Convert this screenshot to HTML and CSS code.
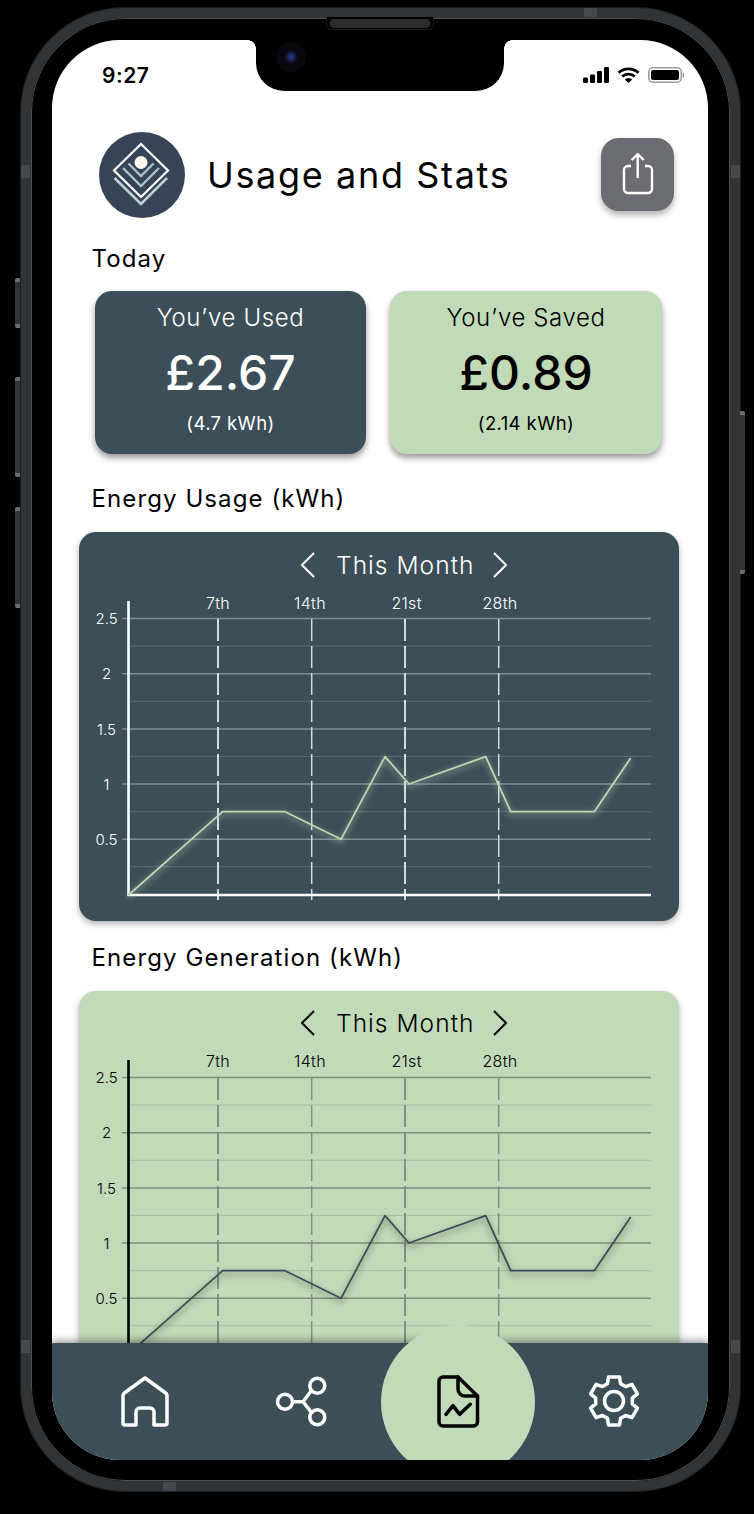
FILE: index.html
```html
<!DOCTYPE html>
<html lang="en">
<head>
    <meta charset="UTF-8">
    <meta name="viewport" content="width=device-width, initial-scale=1.0">
    <title>Usage and Stats</title>
    <link rel="stylesheet" href="styles.css">
</head>
<body>
<div class="phone">
    <span class="side-btn btn-mute"></span>
    <span class="side-btn btn-up"></span>
    <span class="side-btn btn-down"></span>
    <span class="side-btn btn-power"></span>
    <span class="band band-left1"></span>
    <span class="band band-left2"></span>
    <span class="band band-right1"></span>
    <span class="band band-right2"></span>
    <span class="band-h band-top"></span>
    <span class="band-h band-bottom"></span>
    <div class="speaker"></div>

    <div class="screen">
        <div class="notch"><span class="camera"></span></div>

        <div class="status">
            <span class="time">9:27</span>
            <div class="status-icons">
                <svg width="26" height="16" viewBox="0 0 26 16">
                    <rect x="0" y="10.5" width="5" height="5.5" rx="1.2"/>
                    <rect x="7" y="7.5" width="5" height="8.5" rx="1.2"/>
                    <rect x="14" y="4" width="5" height="12" rx="1.2"/>
                    <rect x="21" y="0" width="5" height="16" rx="1.2"/>
                </svg>
                <svg width="23" height="16" viewBox="0 0 23 16">
                    <path class="wifi-arc" d="M1.5 5.8A14.5 14.5 0 0 1 21.5 5.8"/>
                    <path class="wifi-arc" d="M5.2 9.6A9 9 0 0 1 17.8 9.6"/>
                    <path d="M11.5 16L7.8 12.4A5.3 5.3 0 0 1 15.2 12.4Z"/>
                </svg>
                <svg width="37" height="16" viewBox="0 0 37 16">
                    <rect class="batt-case" x="0.75" y="0.75" width="32.5" height="14.5" rx="4"/>
                    <rect x="3" y="3" width="28" height="10" rx="2"/>
                    <rect class="batt-case-fill" x="34.6" y="5.5" width="1.4" height="5" rx="0.7"/>
                </svg>
            </div>
        </div>

        <div class="content">
            <header class="page-head">
                <svg class="logo" width="86" height="86" viewBox="0 0 86 86">
                    <circle class="logo-bg" cx="43" cy="43" r="43"/>
                    <path class="logo-chev" d="M24 36L42 54L60 36"/>
                    <path class="logo-chev" d="M29.5 31.5L42 44L54.5 31.5"/>
                    <path class="logo-diamond" d="M42 12L69 38.5L42 65L15 38.5Z"/>
                    <path class="logo-chev2" d="M15.5 46L42 72L68 46"/>
                    <circle class="logo-sun" cx="42" cy="30.5" r="6.5"/>
                </svg>
                <h1 class="page-title">Usage and Stats</h1>
                <button class="share-btn">
                    <svg width="73" height="73" viewBox="0 0 73 73">
                        <path d="M30 28h-3a4 4 0 0 0-4 4v19a4 4 0 0 0 4 4h20a4 4 0 0 0 4-4V32a4 4 0 0 0-4-4h-3"/>
                        <path d="M36.7 40V16M30.7 22L36.7 16L42.7 22"/>
                    </svg>
                </button>
            </header>

            <h2 class="label label-today">Today</h2>

            <div class="cards">
                <div class="card card-dark">
                    <div class="card-title">You’ve Used</div>
                    <div class="card-value">£2.67</div>
                    <div class="card-sub">(4.7 kWh)</div>
                </div>
                <div class="card card-green">
                    <div class="card-title">You’ve Saved</div>
                    <div class="card-value">£0.89</div>
                    <div class="card-sub">(2.14 kWh)</div>
                </div>
            </div>

            <h2 class="label label-usage">Energy Usage (kWh)</h2>

            <section class="chart chart-dark">
                <div class="chart-head">
                    <svg class="chev" width="14" height="26" viewBox="0 0 14 26"><path d="M13 1L1 13L13 25"/></svg>
                    <span class="month">This Month</span>
                    <svg class="chev" width="14" height="26" viewBox="0 0 14 26"><path d="M1 1L13 13L1 25"/></svg>
                </div>
                <svg class="plot" width="600" height="339" viewBox="0 -16 600 339">
                    <g class="minor">
                        <path d="M51 48H572M51 103.3H572M51 158.4H572M51 213.7H572M51 268.7H572"/>
                    </g>
                    <g class="major">
                        <path d="M43 20.5H572M43 75.7H572M43 131H572M43 186H572M43 241.3H572"/>
                    </g>
                    <g class="vert">
                        <path class="vert-wide" d="M139 21V302M326 21V302"/>
                        <path d="M232.7 21V302M419.7 21V302"/>
                    </g>
                    <path class="axis" d="M49.5 3V297.2M48.2 297H572"/>
                    <polyline class="line" points="49.5,297 143.7,213.7 206,213.7 262,241.3 306,158.7 330,186 406.7,158.7 431.7,213.7 515.3,213.7 551.7,160"/>
                    <g class="ylabels">
                        <text x="27.5" y="26">2.5</text>
                        <text x="27.5" y="81">2</text>
                        <text x="27.5" y="136.500">1.5</text>
                        <text x="27.5" y="191.500">1</text>
                        <text x="27.5" y="246.800">0.5</text>
                    </g>
                    <g class="xlabels">
                        <text x="139" y="10.700">7th</text>
                        <text x="231" y="10.700">14th</text>
                        <text x="327.600" y="10.700">21st</text>
                        <text x="421" y="10.700">28th</text>
                    </g>
                </svg>
            </section>

            <h2 class="label label-gen">Energy Generation (kWh)</h2>

            <section class="chart chart-green">
                <div class="chart-head">
                    <svg class="chev" width="14" height="26" viewBox="0 0 14 26"><path d="M13 1L1 13L13 25"/></svg>
                    <span class="month">This Month</span>
                    <svg class="chev" width="14" height="26" viewBox="0 0 14 26"><path d="M1 1L13 13L1 25"/></svg>
                </div>
                <svg class="plot" width="600" height="339" viewBox="0 -16 600 339">
                    <g class="minor">
                        <path d="M51 48H572M51 103.3H572M51 158.4H572M51 213.7H572M51 268.7H572"/>
                    </g>
                    <g class="major">
                        <path d="M43 20.5H572M43 75.7H572M43 131H572M43 186H572M43 241.3H572"/>
                    </g>
                    <g class="vert">
                        <path class="vert-wide" d="M139 21V302M326 21V302"/>
                        <path d="M232.7 21V302M419.7 21V302"/>
                    </g>
                    <path class="axis" d="M49.5 3V297.2M48.2 297H572"/>
                    <polyline class="line" points="49.5,297 143.7,213.7 206,213.7 262,241.3 306,158.7 330,186 406.7,158.7 431.7,213.7 515.3,213.7 551.7,160"/>
                    <g class="ylabels">
                        <text x="27.5" y="26">2.5</text>
                        <text x="27.5" y="81">2</text>
                        <text x="27.5" y="136.500">1.5</text>
                        <text x="27.5" y="191.500">1</text>
                        <text x="27.5" y="246.800">0.5</text>
                    </g>
                    <g class="xlabels">
                        <text x="139" y="10">7th</text>
                        <text x="231" y="10">14th</text>
                        <text x="327.600" y="10">21st</text>
                        <text x="421" y="10">28th</text>
                    </g>
                </svg>
            </section>
        </div>

        <nav class="nav">
            <a class="nav-item nav-home">
                <svg width="50" height="54" viewBox="0 0 50 54">
                    <path d="M25 4L45 18.500A4 4 0 0 1 47 22V49a2 2 0 0 1-2 2H34V38a4 4 0 0 0-4-4H20a4 4 0 0 0-4 4V51H5a2 2 0 0 1-2-2V22A4 4 0 0 1 5 18.500Z"/>
                </svg>
            </a>
            <a class="nav-item nav-net">
                <svg width="54" height="56" viewBox="0 0 54 56">
                    <circle cx="10" cy="27.700" r="7.500"/>
                    <circle cx="42.300" cy="11.700" r="7.500"/>
                    <circle cx="42.300" cy="43.300" r="7.500"/>
                    <path d="M17.500 27.700H28M36.500 16.500L28 27.700L36.500 38.500"/>
                </svg>
            </a>
            <a class="nav-item nav-report">
                <svg width="45" height="55" viewBox="0 0 45 55">
                    <path d="M3 7a4 4 0 0 1 4-4H22L41.500 22V48a4 4 0 0 1-4 4H7a4 4 0 0 1-4-4Z"/>
                    <path d="M22 3V15a7 7 0 0 0 7 7H41.500"/>
                    <path d="M10 40.300L17 31.700L23.700 40.300L34.300 30.300"/>
                </svg>
            </a>
            <a class="nav-item nav-gear">
                <svg width="54" height="54" viewBox="0 0 54 54">
                    <path d="M21.5 3.100H32.500L33.600 9.700L38.600 12.600L44.900 10.300L50.400 19.800L45.300 24.100V29.900L50.400 34.200L44.900 43.700L38.600 41.400L33.600 44.300L32.500 50.900H21.500L20.400 44.300L15.400 41.400L9.100 43.700L3.600 34.200L8.700 29.900V24.100L3.600 19.800L9.100 10.300L15.400 12.600L20.400 9.700Z"/>
                    <circle cx="27" cy="27" r="9.500"/>
                </svg>
            </a>
        </nav>
        <div class="nav-bubble"></div>
    </div>
</div>
</body>
</html>
```

FILE: styles.css
```css
* {
    box-sizing: border-box;
}

html, body {
    margin: 0;
    height: 1514px;
    background: #000;
    overflow: hidden;
}

body {
    padding: 8px 0 0 21px;
    font-family: "Inter", "Liberation Sans", sans-serif;
    color: #000;
}

/* phone frame */
.phone {
    position: relative;
    width: 719px;
    height: 1483px;
    padding: 22px 22px 21px 21px;
    border: 10px solid #303437;
    border-radius: 104px;
    background: #000;
    box-shadow: inset 0 0 0 1px #4b4f52, 0 0 0 1px #1c1f21;
}

.side-btn {
    position: absolute;
    width: 5px;
    background: linear-gradient(#6a6e71 0 4px, #303437 4px calc(100% - 4px), #6a6e71 calc(100% - 4px));
    border-radius: 2px 0 0 2px;
}

.btn-mute { left: -16px; top: 260px; height: 50px; }
.btn-up { left: -16px; top: 359px; height: 100px; }
.btn-down { left: -16px; top: 489px; height: 101px; }
.btn-power {
    right: -15px;
    top: 393px;
    height: 163px;
    border-radius: 0 2px 2px 0;
}

.band, .band-h {
    position: absolute;
    background: #45494e;
}

.band { width: 9px; height: 13px; }
.band-h { height: 9px; width: 13px; }
.band-left1 { left: -10px; top: 147px; }
.band-left2 { left: -10px; top: 1322px; }
.band-right1 { right: -10px; top: 147px; }
.band-right2 { right: -10px; top: 1322px; }
.band-top { left: 553px; top: -10px; }
.band-bottom { left: 132px; bottom: -10px; }

.speaker {
    position: absolute;
    left: 295px;
    top: -1px;
    width: 108px;
    height: 13px;
    padding: 2px 3px;
    border: 1px solid #1a1c1e;
    border-top: 0;
    border-radius: 0 0 5px 5px;
    background: #000;
}

.speaker::before {
    content: "";
    display: block;
    height: 9px;
    border-radius: 4px;
    background: #2a2c2e;
}

/* screen */
.screen {
    position: relative;
    display: flex;
    flex-direction: column;
    height: 1420px;
    overflow: hidden;
    border-radius: 68px;
    background: #fff;
}

.notch {
    position: absolute;
    left: 204px;
    top: 0;
    width: 248px;
    height: 51px;
    border-radius: 0 0 28px 28px;
    background: #000;
}

.notch::before, .notch::after {
    content: "";
    position: absolute;
    top: 0;
    width: 8px;
    height: 8px;
}

.notch::before {
    left: -8px;
    background: radial-gradient(circle at 0 100%, transparent 7.5px, #000 8px);
}

.notch::after {
    right: -8px;
    background: radial-gradient(circle at 100% 100%, transparent 7.5px, #000 8px);
}

.camera {
    position: absolute;
    left: 20px;
    top: 2px;
    width: 30px;
    height: 30px;
    border-radius: 50%;
    background: radial-gradient(circle, #2a3a8a 0, #141a48 4px, #07070d 7px, #07070d 100%);
}

.status {
    display: flex;
    flex: none;
    justify-content: space-between;
    height: 92px;
    padding: 27px 23px 0 50px;
}

.time {
    font-size: 21px;
    font-weight: 600;
    letter-spacing: .5px;
    line-height: 17px;
}

.status-icons {
    display: flex;
    gap: 8px;
    height: 16px;
}

.status-icons svg {
    display: block;
}

.wifi-arc {
    fill: none;
    stroke: #000;
    stroke-width: 2.8;
}

.batt-case {
    fill: none;
    stroke: #9a9a9a;
    stroke-width: 1.5;
}

.batt-case-fill {
    fill: #9a9a9a;
}

.content {
    flex: 1;
    min-height: 0;
    overflow: hidden;
}

/* header */
.page-head {
    display: flex;
    align-items: center;
    height: 86px;
    padding: 0 34px 0 47px;
}

.logo-bg { fill: #374357; }
.logo-diamond { fill: none; stroke: #fff; stroke-width: 2.2; }
.logo-chev { fill: none; stroke: #a9c5cc; stroke-width: 2.4; }
.logo-chev2 { fill: none; stroke: #bcd3d5; stroke-width: 2.6; }
.logo-sun { fill: #fbf8ec; }

.page-title {
    flex: 1;
    margin: 0 0 0 22px;
    font-size: 36px;
    font-weight: 400;
    letter-spacing: 1.65px;
    line-height: 42px;
}

.share-btn {
    flex: none;
    width: 73px;
    height: 73px;
    margin-bottom: 1px;
    padding: 0;
    border: 0;
    border-radius: 18px;
    background: #6c6d74;
    box-shadow: 0 4px 6px rgba(0, 0, 0, .3);
}

.share-btn svg {
    display: block;
    fill: none;
    stroke: #fff;
    stroke-width: 2.4;
    stroke-linejoin: round;
}

.label {
    height: 30px;
    margin: 0 0 0 39.500px;
    font-size: 24px;
    font-weight: 400;
    letter-spacing: 1.1px;
    line-height: 30px;
}

.label-today { margin-top: 26px; }
.label-usage { margin-top: 30px; }
.label-gen { margin-top: 22px; }

/* summary cards */
.cards {
    display: flex;
    gap: 24px;
    margin: 17px 0 0 43px;
}

.card {
    width: 271px;
    height: 163px;
    padding-top: 12px;
    border-radius: 17px;
    text-align: center;
    box-shadow: 0 4px 6px rgba(0, 0, 0, .4);
}

.card-green {
    width: 272px;
}

.card-dark, .chart-dark {
    background: #3c4f58;
    color: #fff;
}

.card-green, .chart-green {
    background: #c1dab7;
    color: #000;
}

.card-title {
    font-size: 24px;
    font-weight: 300;
    letter-spacing: .6px;
    line-height: 30px;
}

.card-value {
    margin-top: 11px;
    font-size: 48px;
    font-weight: 500;
    line-height: 58px;
}

.card-sub {
    margin-top: 9px;
    font-size: 18.500px;
    font-weight: 400;
    letter-spacing: .4px;
    line-height: 24px;
}

/* charts */
.chart {
    width: 600px;
    height: 389px;
    margin: 18px 0 0 27px;
    border-radius: 17px;
    box-shadow: 0 3px 6px rgba(0, 0, 0, .3);
}

.chart-green {
    margin-top: 17.500px;
}

.chart-head {
    display: flex;
    align-items: center;
    gap: 21px;
    height: 50px;
    margin-top: 0;
    padding: 16px 0 0 222px;
    box-sizing: border-box;
}

.chart-green .chart-head {
    height: 49px;
    margin-bottom: 1px;
}

.chev {
    flex: none;
    fill: none;
    stroke: currentColor;
    stroke-width: 2;
}

.month {
    width: 136px;
    font-size: 24.500px;
    font-weight: 300;
    letter-spacing: 1.05px;
    white-space: nowrap;
}

.plot {
    display: block;
}

.plot text {
    fill: currentColor;
    text-anchor: middle;
    font-weight: 300;
}

.ylabels { font-size: 15px; }
.xlabels { font-size: 16px; letter-spacing: .3px; }

.minor path { fill: none; stroke-width: 1; }
.major path { fill: none; stroke-width: 1.5; }
.axis { fill: none; stroke: currentColor; stroke-width: 2.6; }
.vert path { fill: none; stroke-width: 1.5; stroke-dasharray: 22 5; }
.vert .vert-wide { stroke-width: 2; }
.line { fill: none; stroke-width: 1.8; stroke-linejoin: round; }

.chart-dark .minor path { stroke: #5b6c74; }
.chart-dark .major path { stroke: #7d8c93; }
.chart-dark .vert path { stroke: #d5dadc; }
.chart-dark .line {
    stroke: #bdd6b3;
    filter: drop-shadow(0 2px 3px rgba(193, 218, 183, .85));
}

.chart-green .minor path { stroke: #a9bfa0; }
.chart-green .major path { stroke: #7f8f7c; }
.chart-green .vert path { stroke: #858f85; }
.chart-green .line {
    stroke: #3c4f58;
    filter: drop-shadow(0 3px 3px rgba(0, 0, 0, .5));
}

/* bottom nav */
.nav {
    position: relative;
    display: flex;
    flex: none;
    height: 117px;
    background: #3c4f58;
    box-shadow: 0 -3px 7px rgba(0, 0, 0, .35);
}

.nav-item {
    display: block;
    flex: none;
    position: relative;
    z-index: 1;
    height: 54px;
}

.nav-item svg {
    display: block;
    fill: none;
    stroke: #fff;
    stroke-width: 3.5;
    stroke-linejoin: round;
    stroke-linecap: round;
}

.nav-home { margin: 31px 0 0 68px; }
.nav-net { margin: 31px 0 0 105px; }
.nav-report { margin: 31px 0 0 107px; }
.nav-gear { margin: 31px 0 0 106px; }
.nav-report svg { stroke: #000; }

.nav-bubble {
    position: absolute;
    left: 329px;
    top: 1285px;
    width: 154px;
    height: 154px;
    border-radius: 50%;
    background: #c1dab7;
}
```
